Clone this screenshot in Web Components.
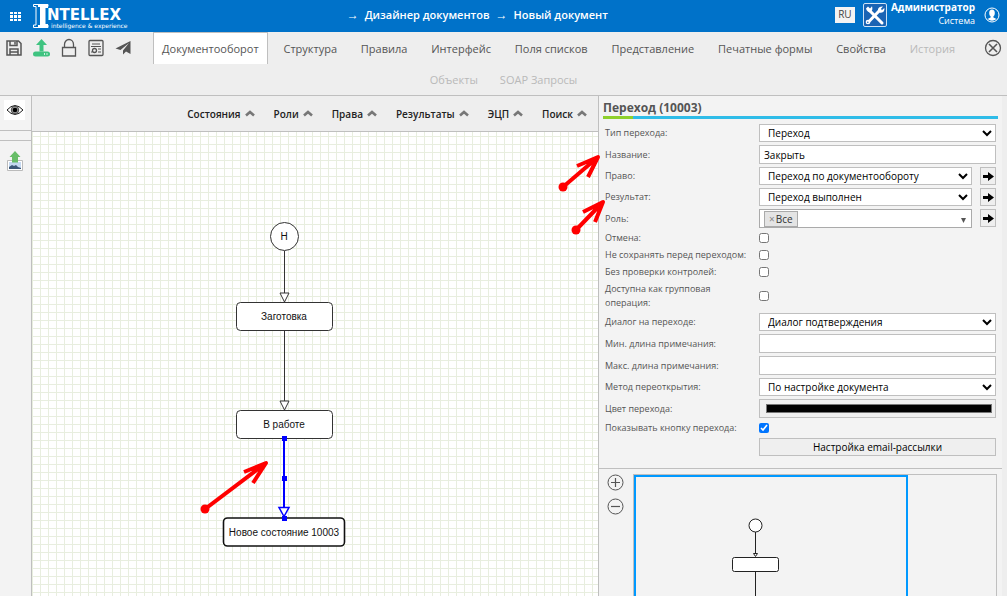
<!DOCTYPE html>
<html lang="ru">
<head>
<meta charset="utf-8">
<title>Intellex — Дизайнер документов</title>
<style>
  html, body { height: 100%; margin: 0; }
  body {
    --line: #bfbfbf; --bar: #eee; --panel: #f3f3f3; --ink: #555;
    font-family: "Open Sans", "Noto Sans", sans-serif; font-size: 10px; color: var(--ink);
    overflow: hidden;
  }
</style>
</head>
<body>
<designer-app></designer-app>

<script>
const define = (name, html, setup) => {
  const tpl = document.createElement('template');
  tpl.innerHTML = html;
  customElements.define(name, class extends HTMLElement {
    constructor() {
      super();
      this.attachShadow({ mode: 'open' }).append(tpl.content.cloneNode(true));
    }
    connectedCallback() { if (setup && !this.ready) { this.ready = true; setup(this, this.shadowRoot); } }
  });
};

/* Brand mark and wordmark */
define('brand-logo', `
<style>
  :host { display: flex; align-items: center; color: #fff; }
  svg { display: block; flex: none; }
  a { display: flex; align-items: center; color: inherit; text-decoration: none; }
  .words { display: grid; align-content: start; margin-left: -2px; padding-top: 4px; }
  b { font: 700 15px/14px "DejaVu Sans", sans-serif; }
  small { font: 6px/7px "DejaVu Sans", sans-serif; padding-left: 4px; white-space: nowrap; }
</style>
<a href="#">
  <svg width="16" height="24" viewBox="0 0 16 24">
    <path d="M15 .5H.5V2.500H3V21H.5V23.500H15V21H12V2.500H15Z" fill="none" stroke="#fff"/>
    <path d="M5 0h10v4h-3v16h3v4H5v-3h2V3H5z" fill="#fff"/>
  </svg>
  <span class="words"><b>NTELLEX</b><small>intelligence &amp; experience</small></span>
</a>`);

/* Top bar */
define('app-header', `
<style>
  :host { display: flex; align-items: stretch; height: 32px; background: #0072c9; color: #fff; }
  button { border: 0; background: none; padding: 0; font: inherit; color: inherit; }
  .grid { width: 33px; display: flex; align-items: center; padding-left: 10px; box-sizing: border-box; }
  nav { flex: 1; display: flex; align-items: center; justify-content: center; gap: 6px;
        font-size: 11px; font-weight: 600; padding: 0 8px 4px 0; }
  nav a { color: inherit; text-decoration: none; }
  nav span { font-size: 12px; }
  .side { display: flex; }
  .lang { align-self: flex-start; margin: 7px 8px 0 0; width: 20px; height: 16px; background: var(--panel);
          color: #444; font-size: 10px; line-height: 13px; padding-bottom: 2px; }
  .tools { margin: 3px 4px 0 0; align-self: flex-start; }
  .who { text-align: right; font-size: 9px; line-height: 13px; padding-top: 1px; }
  .who b { display: block; font-size: 10px; }
  .user { margin: 0 7px 2px 9px; }
  svg { display: block; }
</style>
<button class="grid" aria-label="Меню"><svg width="12" height="9" viewBox="0 0 12 9" fill="#fff"><path d="M0 0h3v2H0zM4 0h3v2H4zM8 0h3v2H8zM0 3h3v3H0zM4 3h3v3H4zM8 3h3v3H8zM0 7h3v2H0zM4 7h3v2H4zM8 7h3v2H8z"/></svg></button>
<brand-logo></brand-logo>
<nav><span>→</span><a href="#">Дизайнер документов</a><span>→</span><a href="#">Новый документ</a></nav>
<div class="side">
  <button class="lang">RU</button>
  <button class="tools" aria-label="Администрирование"><svg width="24" height="24" viewBox="0 0 24 24">
    <rect x=".5" y=".5" width="23" height="23" rx="1.500" fill="#1a64b4" stroke="#cfe3f5"/>
    <path d="M7 8 19 20" stroke="#fff" stroke-width="3" stroke-linecap="round"/>
    <path d="M3 5.500 5 3.500 7 5.500 9 3.300C9.800 5.500 9.300 8 8 8.800 6.500 9.800 4 9 3 5.500z" fill="#fff"/>
    <path d="M5 19.500 17 7" stroke="#fff" stroke-width="3" stroke-linecap="round"/>
    <path d="M20 3.500 17.800 6 18.800 7.200 21.300 5C22 8 20 10.500 16.500 9.500 13.800 8 14.500 3 20 3.500z" fill="#fff"/>
    <circle cx="5" cy="19" r="2.300" fill="#fff"/><circle cx="4.800" cy="19.200" r=".8" fill="#1a64b4"/>
  </svg></button>
  <div class="who"><b>Администратор</b>Система</div>
  <button class="user" aria-label="Профиль"><svg width="16" height="16" viewBox="0 0 16 16">
    <circle cx="8" cy="8" r="7" fill="none" stroke="#fff"/>
    <ellipse cx="8" cy="6" rx="2.800" ry="3.500" fill="#fff"/>
    <path d="M6.600 8.500h2.800v2L12.500 12Q8 15.500 3.500 12l3.100-1.500z" fill="#fff"/>
  </svg></button>
</div>`);

/* Toolbar with the document actions and the tabs */
define('designer-toolbar', `
<style>
  :host { display: block; background: var(--bar); border-bottom: 1px solid var(--line); height: 63px; color: var(--ink); }
  button { border: 0; background: none; padding: 0; }
  a { color: inherit; text-decoration: none; }
  svg { display: block; fill: none; stroke: #555; stroke-width: 1.300; }
  .row { display: flex; height: 32px; font-size: 11px; }
  .acts { display: flex; align-items: center; gap: 9px; width: 153px; padding-left: 5px; box-sizing: border-box; }
  nav { flex: 1; display: flex; justify-content: space-between; }
  nav a { padding: 0 8px; line-height: 34px; white-space: nowrap; }
  nav a[aria-current] { background: #fff; border: solid var(--line); border-width: 1px 1px 0; line-height: 32px; }
  .off { color: #b9b9b9; }
  .close { margin: 0 4px 0 20px; }
  .second { justify-content: center; gap: 22px; line-height: 32px; }
</style>
<div class="row">
  <div class="acts">
    <button aria-label="Сохранить"><svg width="18" height="18" viewBox="0 0 18 18"><path d="M2 2h11.500L16 4.500V16H2zM5 2v4.500h7V2M10 3v2.500M5 16v-6h8v6M5 13h8" stroke-width="1.500"/></svg></button>
    <button aria-label="Опубликовать"><svg width="19" height="20" viewBox="0 0 19 20"><path d="M9.500 1 15 7h-3.500v6.500h-4V7H4z" fill="#3fc380" stroke="none"/><path d="M3.500 16h12" stroke="#3fc380" stroke-width="5" stroke-linecap="round"/><path d="M12 16h1M14.500 16h1" stroke="#fff"/></svg></button>
    <button aria-label="Заблокировать"><svg width="18" height="20" viewBox="0 0 18 20"><path d="M2.500 9.500h13V18h-13zM4.500 9V6.500a4.500 5 0 0 1 9 0V9"/></svg></button>
    <button aria-label="Сертификат"><svg width="18" height="18" viewBox="0 0 18 18"><rect x="2" y="1.500" width="14" height="15" rx="1"/><path d="M5 5h8M4 7.500h10M11 10h3M11 13h3M4 13h1.500" stroke-width="1"/><circle cx="7.500" cy="11.500" r="2"/></svg></button>
    <button aria-label="Отправить"><svg width="18" height="18" viewBox="0 0 18 18"><path d="M16.500 2v13l-4.500-2.500-3 3V11.500L15 4 6.500 11 1.500 9.500z" fill="#555" stroke="none"/></svg></button>
  </div>
  <nav>
    <a href="#" aria-current="page">Документооборот</a><a href="#">Структура</a><a href="#">Правила</a><a href="#">Интерфейс</a><a href="#">Поля списков</a><a href="#">Представление</a><a href="#">Печатные формы</a><a href="#">Свойства</a><a href="#" class="off">История</a>
  </nav>
  <button class="close" aria-label="Закрыть"><svg width="20" height="20" viewBox="0 0 20 20"><circle cx="10" cy="10" r="7.500"/><path d="m6 6 8 8M14 6l-8 8" stroke-width="1.600"/></svg></button>
</div>
<div class="row second off"><a href="#">Объекты</a><a href="#">SOAP Запросы</a></div>`);

/* Narrow rail on the left */
define('side-rail', `
<style>
  :host { display: block; width: 31px; background: var(--panel); border-right: 1px solid var(--line); }
  button { display: grid; place-items: center; width: 21px; height: 20px; border: 0; padding: 0; margin: 0 4px; background: none; }
  .top { padding: 4px 0 10px; border-bottom: 1px solid var(--line); }
  .top button { background: #fff; }
  .gap { height: 9px; border-bottom: 1px solid var(--line); margin-bottom: 10px; }
</style>
<div class="top"><button aria-label="Просмотр"><svg width="18" height="12" viewBox="0 0 18 12"><path d="M1 6Q9-3 17 6 9 15 1 6z" fill="#fff" stroke="#222"/><circle cx="9" cy="6" r="3.800" fill="#999" stroke="#222" stroke-width=".7"/><circle cx="9" cy="6" r="2.300"/></svg></button></div>
<div class="gap"></div>
<button aria-label="Загрузить изображение"><svg width="18" height="20" viewBox="0 0 18 20"><path d="M1.500 9.500h15v10h-15z" fill="#fff" stroke="#bbb"/><path d="M3 11h12v7H3z" fill="#c5d9f1"/><path d="M3 18v-2l3-2 2 1 2-1 2 2 3 1v1z" fill="#3d5878"/><path d="M9 0l5.500 6H12v5.500H6V6H3.500z" fill="#67bd67"/></svg></button>`);

/* Menu above the canvas */
define('canvas-menu', `
<style>
  :host { display: flex; justify-content: flex-end; gap: 19px; align-items: center; height: 35px; padding-right: 11px;
          background: var(--bar); border-bottom: 1px solid var(--line); }
  button { display: flex; align-items: center; gap: 4px; border: 0; padding: 0; background: none; color: #222;
           font: 600 10px/16px "Open Sans", sans-serif; }
</style>`, (el, root) => {
  for (const name of ['Состояния', 'Роли', 'Права', 'Результаты', 'ЭЦП', 'Поиск']) {
    const b = document.createElement('button');
    b.innerHTML = `<span>${name}</span><svg width="10" height="7" viewBox="0 0 10 7"><path d="M1 5.500 5 2l4 3.500" fill="none" stroke="#777" stroke-width="2.600"/></svg>`;
    root.append(b);
  }
});

/* Red pointer: from a dot to an arrow head */
define('callout-arrow', `
<style>
  :host { position: absolute; display: block; pointer-events: none; }
  svg { display: block; overflow: visible; }
</style>
<svg width="1" height="1" fill="none" stroke="red" stroke-width="4" stroke-linejoin="round"><circle r="4.500" fill="red" stroke="none"/><path/></svg>`,
(el, root) => root.querySelector('path').setAttribute('d', el.getAttribute('path')));

/* Workflow drawing */
define('flow-canvas', `
<style>
  :host { display: block; position: relative; overflow: hidden;
    background: #fff;
    background-image: linear-gradient(90deg, #e8eedf 1px, transparent 1px), linear-gradient(#e8eedf 1px, transparent 1px);
    background-size: 8px 8px; background-position: 0 0, 0 4px; }
  svg { display: block; width: 100%; height: 100%; }
  text { font: 10px "Liberation Sans", Arial, sans-serif; text-anchor: middle; fill: #111; stroke: none; }
  callout-arrow { left: 173px; top: 377px; }
</style>
<svg fill="#fff" stroke="#333">
  <path d="M252.500 119v42M252.500 199v70"/>
  <path d="M248 161h9l-4.500 9zM248 269h9l-4.500 9z"/>
  <circle cx="252.500" cy="104.500" r="14"/>
  <rect x="204.500" y="170.500" width="96" height="28" rx="4"/>
  <rect x="204.500" y="278.500" width="96" height="28" rx="4"/>
  <rect x="191.500" y="386" width="121" height="28" rx="4" stroke="#111" stroke-width="1.600"/>
  <path d="M252 307v69" stroke="#00f" stroke-width="2"/>
  <path d="M247 375.500h10l-5 9z" stroke="#00f" stroke-width="1.500"/>
  <path d="M250 304h5v5h-5zM250 344h5v5h-5zM250 384h5v5h-5z" fill="#00f" stroke="none"/>
  <text x="252" y="108">Н</text>
  <text x="252" y="188">Заготовка</text>
  <text x="252" y="296">В работе</text>
  <text x="252" y="404">Новое состояние 10003</text>
</svg>
<callout-arrow path="M0 0 61-46M39-37 61-46 48-26"></callout-arrow>`);

/* One labelled property */
define('prop-field', `
<style>
  :host { display: grid; grid-template-columns: 154px 1fr; align-items: center; line-height: 14px; }
  .ctl { display: flex; gap: 8px; min-width: 0; }
  label { white-space: pre; font-size: 9px; }
  select, input[type=text], input[type=color], .multi, button { box-sizing: border-box; flex: 1; min-width: 0; margin: 0;
    border: 1px solid var(--line); border-radius: 0; background: #fff; color: #000; font: 10px/14px "Open Sans", sans-serif; height: 19px; padding: 0 4px; }
  select, button { height: 18px; }
  button { background: #efefef; }
  input[type=color] { padding: 0; background: #efefef; }
  input[type=color]::-webkit-color-swatch-wrapper { padding: 4px 3px 4px 6px; }
  input[type=checkbox] { width: 10px; height: 10px; margin: 2px 0; }
  .go { flex: none; width: 16px; padding: 0; display: grid; place-items: center; }
  .multi { display: flex; align-items: center; border-color: #aaa; }
  .tag { display: flex; align-items: center; gap: 1px; height: 14px; border: 1px solid #aaa; background: #e4e4e4; padding: 0 4px; color: #333; }
  .multi button { flex: none; border: 0; padding: 0; background: none; height: 14px; color: #888; }
  .multi input[type=text] { border: 0; height: 15px; padding: 0; }
</style>
<label for="c"></label><div class="ctl"></div>`, (el, root) => {
  const kind = el.getAttribute('kind'), value = el.getAttribute('value') || '', label = el.getAttribute('label') || '';
  root.querySelector('label').textContent = label;
  const go = el.hasAttribute('go') ? `<button class="go" aria-label="Открыть"><svg width="11" height="9" viewBox="0 0 11 9"><path d="M0 3h5V0l6 4.500L5 9V6H0z"/></svg></button>` : '';
  root.querySelector('.ctl').innerHTML = {
    select: `<select id="c"><option>${value}</option></select>`,
    text: `<input id="c" type="text" value="${value}">`,
    color: `<input id="c" type="color" value="${value}">`,
    check: `<input id="c" type="checkbox"${value ? ' checked' : ''}>`,
    button: `<button id="c">${value}</button>`,
    multi: `<div class="multi"><span class="tag"><button aria-label="Убрать">×</button>${value}</span><input id="c" type="text"><button aria-label="Список"><svg width="7" height="5" viewBox="0 0 7 5"><path d="M1 0h5L3.500 5z" fill="#555"/></svg></button></div>`
  }[kind] + go;
});

/* Property sheet of the selected transition */
define('prop-sheet', `
<style>
  :host { display: block; border-bottom: 1px solid var(--line); padding: 4px 4px 12px; }
  h2 { margin: 0; font: 700 12px/16px "Open Sans", sans-serif; }
  .rule { height: 3px; background: linear-gradient(90deg, #8fd02c 30px, #2fbce8 30px); margin-bottom: 5px; }
  form { display: grid; gap: 3px; padding: 0 2px; }
</style>
<h2>Переход (10003)</h2>
<div class="rule"></div>
<form>
  <prop-field label="Тип перехода:" kind="select" value="Переход"></prop-field>
  <prop-field label="Название:" kind="text" value="Закрыть"></prop-field>
  <prop-field label="Право:" kind="select" value="Переход по документообороту" go></prop-field>
  <prop-field label="Результат:" kind="select" value="Переход выполнен" go></prop-field>
  <prop-field label="Роль:" kind="multi" value="Все" go></prop-field>
  <prop-field label="Отмена:" kind="check"></prop-field>
  <prop-field label="Не сохранять перед переходом:" kind="check"></prop-field>
  <prop-field label="Без проверки контролей:" kind="check"></prop-field>
  <prop-field label="Доступна как групповая&#10;операция:" kind="check"></prop-field>
  <prop-field label="Диалог на переходе:" kind="select" value="Диалог подтверждения"></prop-field>
  <prop-field label="Мин. длина примечания:" kind="text"></prop-field>
  <prop-field label="Макс. длина примечания:" kind="text"></prop-field>
  <prop-field label="Метод переоткрытия:" kind="select" value="По настройке документа"></prop-field>
  <prop-field label="Цвет перехода:" kind="color" value="#000000"></prop-field>
  <prop-field label="Показывать кнопку перехода:" kind="check" value="on"></prop-field>
  <prop-field kind="button" value="Настройка email-рассылки"></prop-field>
</form>`);

/* Overview with the zoom buttons */
define('mini-map', `
<style>
  :host { display: flex; flex: 1; min-height: 0; padding: 5px 5px 0 8px; }
  .zoom { display: grid; gap: 6px; align-content: start; width: 26px; }
  button { border: 0; padding: 0; background: none; width: 18px; height: 18px; }
  svg { display: block; }
  .map { flex: 1; border: 1px solid var(--line); border-bottom: 0; overflow: hidden; }
  .view { width: 270px; height: 100%; border: 2px solid #09f; border-bottom: 0; }
</style>
<div class="zoom">
  <button aria-label="Увеличить"><svg width="18" height="18" viewBox="0 0 18 18" fill="none" stroke="#555"><circle cx="8.500" cy="8.500" r="7.500"/><path d="M4 8.500h9M8.500 4v9" stroke-width="1.200"/></svg></button>
  <button aria-label="Уменьшить"><svg width="18" height="18" viewBox="0 0 18 18" fill="none" stroke="#555"><circle cx="8.500" cy="8.500" r="7.500"/><path d="M4 8.500h9" stroke-width="1.200"/></svg></button>
</div>
<div class="map"><div class="view"><svg width="270" height="240" fill="#fff" stroke="#222">
  <path d="M119.500 55v21M119.500 94v40"/><path d="M117.500 76.500h4l-2 3z"/>
  <circle cx="119.500" cy="48.500" r="6.500"/><rect x="96.500" y="80.500" width="46" height="14" rx="2"/>
</svg></div></div>`);

/* Right column */
define('side-panel', `
<style>
  :host { display: flex; flex-direction: column; position: relative; width: 403px; background: var(--panel);
          border-left: 1px solid var(--line); border-right: 5px solid var(--bar); }
  callout-arrow:nth-of-type(1) { left: -36px; top: 91px; }
  callout-arrow:nth-of-type(2) { left: -23px; top: 134px; }
</style>
<prop-sheet></prop-sheet>
<mini-map></mini-map>
<callout-arrow path="M0 0 35-30M14-21 35-30 25-10"></callout-arrow>
<callout-arrow path="M0 0 27-28M7-18 27-28 19-8"></callout-arrow>`);

define('designer-app', `
<style>
  :host { display: flex; flex-direction: column; height: 100vh; }
  main { flex: 1; display: flex; min-height: 0; }
  .work { flex: 1; min-width: 0; display: flex; flex-direction: column; }
  flow-canvas { flex: 1; min-height: 0; }
</style>
<app-header></app-header>
<designer-toolbar></designer-toolbar>
<main>
  <side-rail></side-rail>
  <div class="work"><canvas-menu></canvas-menu><flow-canvas></flow-canvas></div>
  <side-panel></side-panel>
</main>`);
</script>
</body>
</html>
